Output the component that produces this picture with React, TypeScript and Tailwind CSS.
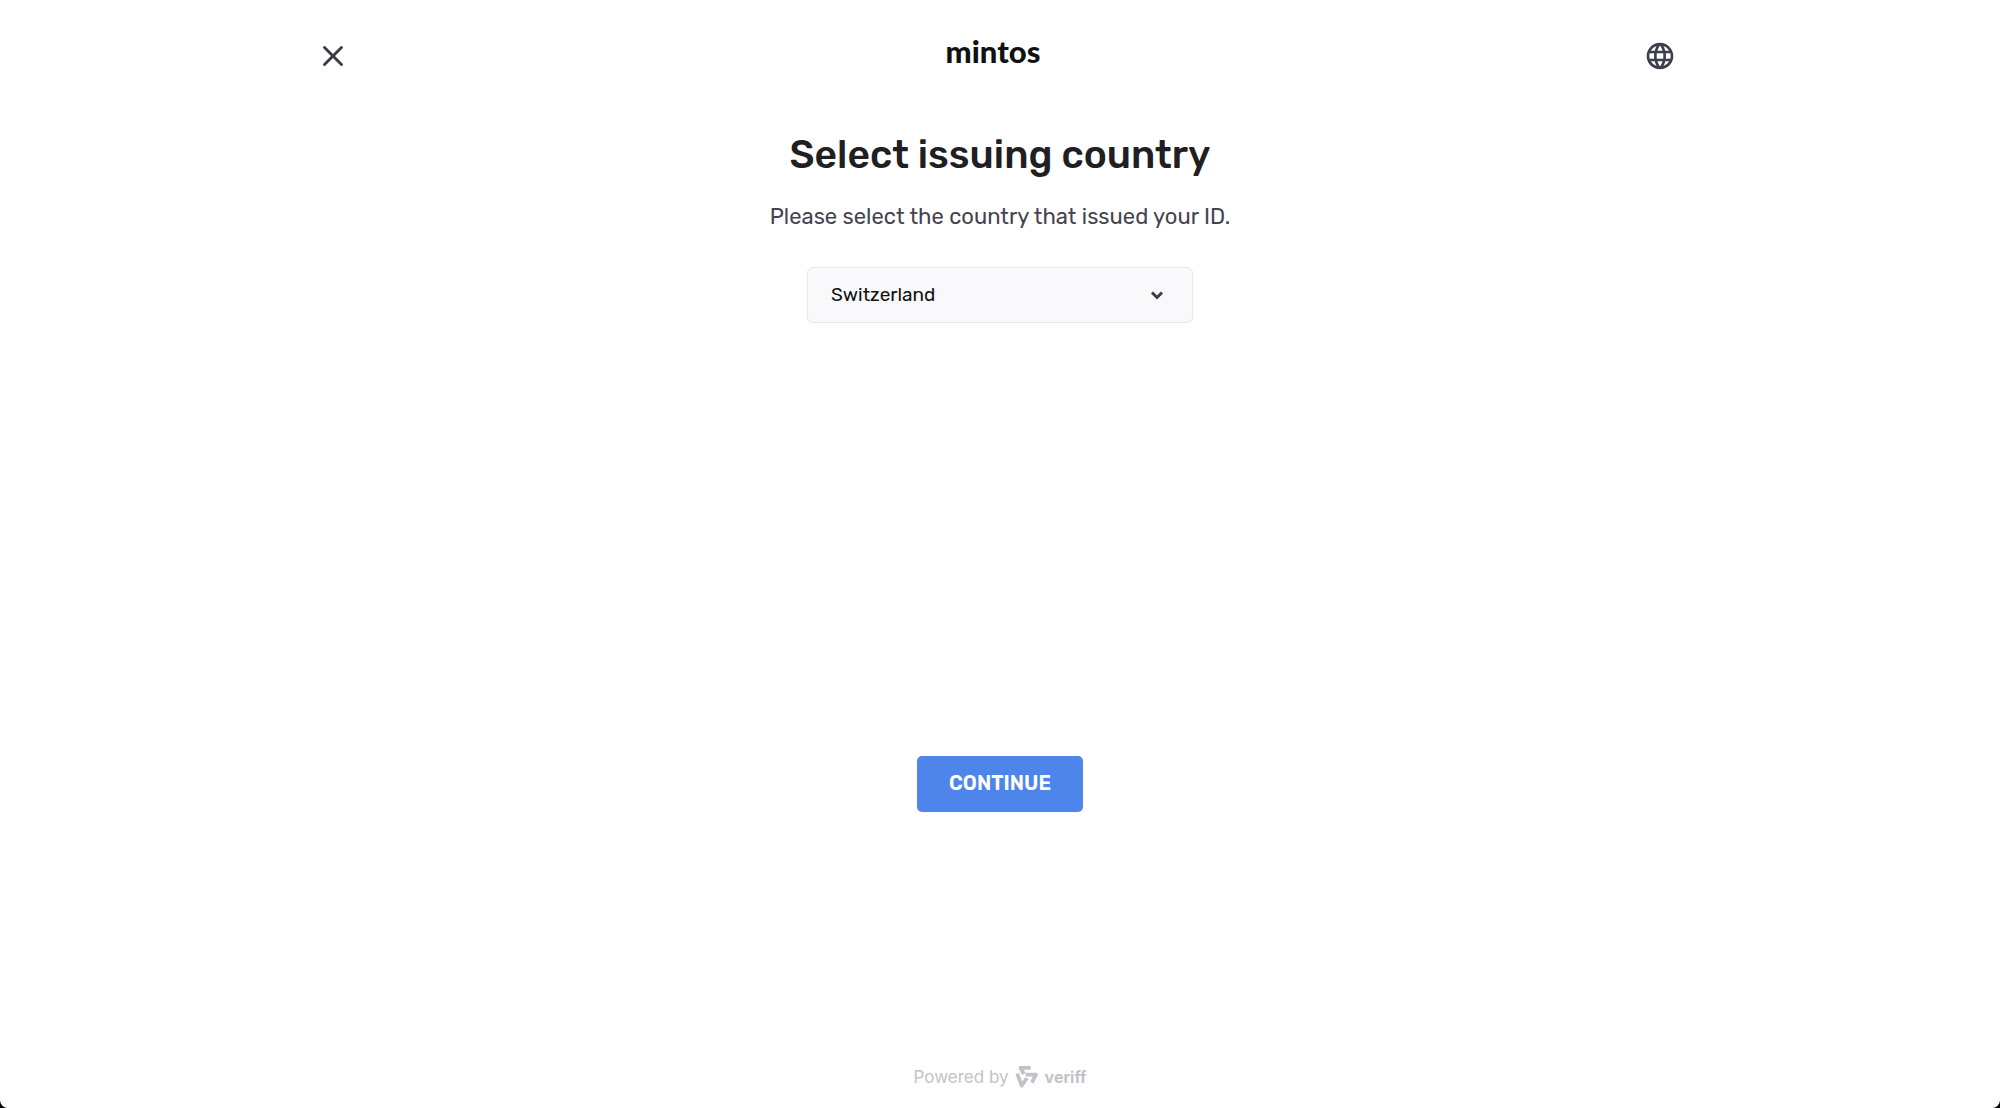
import { useState } from 'react';
import { X } from 'lucide-react';
import { MdLanguage } from 'react-icons/md';

const COUNTRIES = ['Switzerland', 'Austria', 'Estonia', 'Germany', 'Latvia', 'Lithuania'];

function VeriffMark() {
  return (
    <svg width="24" height="24" viewBox="0 0 24 24" fill="none" stroke="#c3c2ca" strokeWidth="3.8" strokeLinejoin="round" aria-hidden="true">
      <path d="M15.6 2.8H5.4L9 9" />
      <path d="M10.6 9.6H21L16.8 17.6" />
      <path d="M2.2 8.6L6.6 20.6L12 13" />
    </svg>
  );
}

export default function App() {
  const [country, setCountry] = useState('Switzerland');

  return (
    <div className="min-h-screen bg-black font-['Rubik','Roboto',sans-serif]">
      <div className="flex min-h-screen flex-col rounded-b-lg bg-white">
        <header className="mx-auto flex w-full max-w-[1376px] items-center pt-8">
          <button type="button" aria-label="Close" className="flex h-12 w-[42px] items-center justify-center text-[#3a3a44]">
            <X size={34} />
          </button>
          <div className="flex-1 pb-2.5 text-center font-['Lato',sans-serif] text-[31px] leading-8 font-black text-[#111]">
            mintos
          </div>
          <button type="button" aria-label="Change language" className="flex h-12 w-14 items-center justify-center text-[#3f3f4c]">
            <MdLanguage size={32} />
          </button>
        </header>

        <main className="flex flex-col items-center px-4 pt-[49px]">
          <h1 className="text-center text-[39px] leading-[52px] font-medium text-[#202022]">Select issuing country</h1>
          <label htmlFor="country" className="mt-5 text-center text-[22px] leading-8 text-[#45434f]">
            Please select the country that issued your ID.
          </label>

          <div className="relative mt-[34px] w-full max-w-[386px]">
            <select
              id="country"
              value={country}
              onChange={(e) => setCountry(e.target.value)}
              className="h-14 w-full appearance-none rounded-md border border-[#e8e8ea] bg-[#f9f9fb] px-[23px] text-[19px] text-[#111]"
            >
              {COUNTRIES.map((name) => (
                <option key={name}>{name}</option>
              ))}
            </select>
            <svg className="pointer-events-none absolute top-1/2 right-7 -translate-y-1/2" width="16" height="16" viewBox="0 0 16 16" fill="none" stroke="#3c3c44" strokeWidth="3" aria-hidden="true">
              <path d="M3 5.5L8 10.5L13 5.5" />
            </svg>
          </div>

          <button type="button" className="mt-[433px] h-14 rounded-[5px] bg-[#4e85eb] px-8 pb-0.5 text-[20px] font-semibold text-white">
            CONTINUE
          </button>
        </main>

        <footer className="mt-auto flex items-center justify-center pb-[19px] text-[#c3c2ca]">
          <span className="font-['Inter',sans-serif] text-[17px] leading-6">Powered by</span>
          <span className="ml-1.5 flex items-center gap-1.5">
            <VeriffMark />
            <span className="font-['Inter',sans-serif] text-base leading-6 font-bold">veriff</span>
          </span>
        </footer>
      </div>
    </div>
  );
}
